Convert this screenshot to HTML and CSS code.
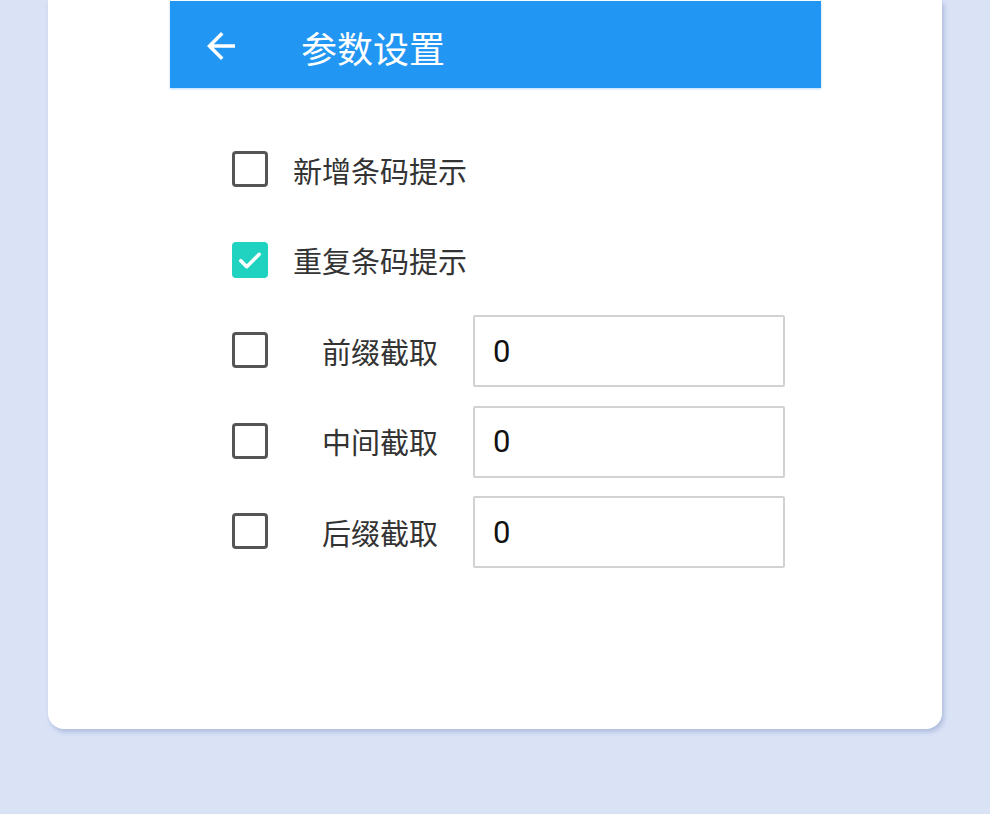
FILE: index.html
```html
<!DOCTYPE html>
<html lang="zh-CN">
<head>
<meta charset="utf-8">
<title>参数设置</title>
<link rel="stylesheet" href="styles.css">
</head>
<body>
<div class="card">
  <div class="screen">
    <header class="appbar">
      <svg class="back" viewBox="0 0 24 24" aria-hidden="true"><path d="M20 11H7.83l5.59-5.59L12 4l-8 8 8 8 1.41-1.41L7.83 13H20v-2z"/></svg>
      <h1 class="title">参数设置</h1>
    </header>
    <div class="form">
      <div class="row">
        <span class="box"></span>
        <span class="label">新增条码提示</span>
      </div>
      <div class="row">
        <span class="box checked"><svg viewBox="0 0 24 24"><path d="M5.5 12.5l4.2 4.2L18.5 8" /></svg></span>
        <span class="label">重复条码提示</span>
      </div>
      <div class="row">
        <span class="box"></span>
        <span class="label">前缀截取</span>
        <div class="field">0</div>
      </div>
      <div class="row">
        <span class="box"></span>
        <span class="label">中间截取</span>
        <div class="field">0</div>
      </div>
      <div class="row">
        <span class="box"></span>
        <span class="label">后缀截取</span>
        <div class="field">0</div>
      </div>
    </div>
  </div>
</div>
</body>
</html>
```
FILE: styles.css
```css
html, body {
  margin: 0;
  padding: 0;
}
body {
  background: #dae3f6;
  width: 990px;
  height: 814px;
  overflow: hidden;
  font-family: "Noto Sans CJK SC", "Noto Sans", sans-serif;
}
.card {
  margin-left: 48px;
  width: 894px;
  height: 729px;
  background: #ffffff;
  border-radius: 0 0 16px 16px;
  box-shadow: 2px 3px 5px rgba(120, 140, 190, 0.45);
  padding-top: 1px;
  box-sizing: border-box;
}
.screen {
  margin-left: 122px;
  width: 651px;
}
.appbar {
  height: 87px;
  background: #2196f3;
  display: flex;
  align-items: center;
  box-shadow: 0 1px 2px rgba(33, 150, 243, 0.35);
}
.back {
  width: 42px;
  height: 42px;
  fill: #ffffff;
  margin-left: 30px;
  margin-top: 2px;
}
.title {
  margin: 0 0 0 59px;
  font-size: 36px;
  font-weight: 400;
  color: #ffffff;
  line-height: 1;
  padding-top: 4px;
}
.form {
  padding: 46px 0 0 62px;
  display: grid;
  row-gap: 18.5px;
}
.row {
  height: 72px;
  display: grid;
  grid-template-columns: 36px 205px 312px;
  align-items: center;
}
.box {
  width: 36px;
  height: 36px;
  box-sizing: border-box;
  border: 3px solid #555555;
  border-radius: 4px;
  margin-top: -2px;
}
.box.checked {
  border: none;
  background: #1fd3c0;
  display: flex;
  align-items: center;
  justify-content: center;
}
.box.checked svg {
  width: 34px;
  height: 34px;
  fill: none;
  stroke: #ffffff;
  stroke-width: 2.5;
  stroke-linecap: round;
  stroke-linejoin: round;
}
.label {
  margin-left: 25px;
  width: 174px;
  font-size: 29px;
  color: #333333;
  text-align: center;
  line-height: 1;
  white-space: nowrap;
}
.field {
  width: 312px;
  height: 72px;
  box-sizing: border-box;
  border: 2px solid #d2d2d2;
  border-radius: 2px;
  padding: 0 0 0 18px;
  display: flex;
  align-items: center;
  font-family: Roboto, "Noto Sans CJK SC", sans-serif;
  font-size: 31px;
  color: #111111;
}
```
